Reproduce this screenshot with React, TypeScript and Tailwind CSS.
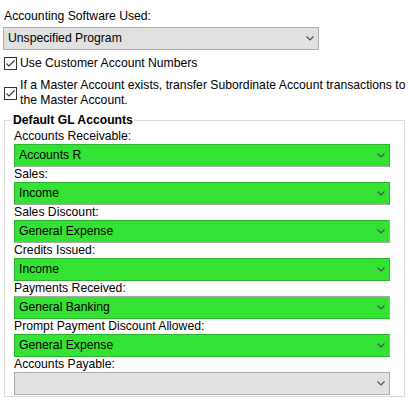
import React from 'react';

const font = { fontFamily: '"Liberation Sans", Arial, sans-serif' };

function Chevron() {
  return (
    <svg width="8" height="5" viewBox="0 0 8 5" className="shrink-0">
      <polyline points="0.5,0.5 4,4 7.5,0.5" fill="none" stroke="#4d4d4d" strokeWidth="1.1" />
    </svg>
  );
}

function Select({ value, className }: { value: string; className: string }) {
  return (
    <div className={`flex h-[23px] items-center justify-between border pl-[4px] pr-[4px] ${className}`}>
      <span className="leading-[15px] text-black">{value}</span>
      <Chevron />
    </div>
  );
}

function Check() {
  return (
    <span className="flex h-[13px] w-[13px] shrink-0 items-center justify-center border border-[#333] bg-white">
      <svg width="11" height="11" viewBox="0 0 11 11">
        <polyline points="1.5,5.5 4,8 9.5,2.5" fill="none" stroke="#333" strokeWidth="1.1" />
      </svg>
    </span>
  );
}

const rows = [
  { label: 'Accounts Receivable:', value: 'Accounts R', edge: 'bg-[#33e233] border-[#2bb52b] border-b-[#a8a8a8]' },
  { label: 'Sales:', value: 'Income', edge: 'bg-[#33e233] border-[#2bb52b] border-b-[#a8a8a8]' },
  { label: 'Sales Discount:', value: 'General Expense', edge: 'bg-[#33e233] border-[#2bb52b] border-r-[#a8a8a8] border-b-[#a8a8a8]' },
  { label: 'Credits Issued:', value: 'Income', edge: 'bg-[#33e233] border-[#2bb52b]' },
  { label: 'Payments Received:', value: 'General Banking', edge: 'bg-[#33e233] border-[#a8a8a8] border-b-[#2bb52b] border-l-[#2bb52b]' },
  { label: 'Prompt Payment Discount Allowed:', value: 'General Expense', edge: 'bg-[#33e233] border-[#2bb52b] border-r-[#a8a8a8]' },
  { label: 'Accounts Payable:', value: '', edge: 'bg-[#e1e1e1] border-[#adadad]' },
];

export default function App() {
  return (
    <div className="h-[415px] w-[420px] bg-white pl-[3px] pt-[9px] text-[12.2px] leading-[15px] text-black" style={font}>
      <div className="pl-[1px]">Accounting Software Used:</div>
      <div className="mt-[3px] w-[316px]">
        <Select value="Unspecified Program" className="bg-[#e1e1e1] border-[#adadad]" />
      </div>

      <div className="mt-[6px] flex items-center gap-[3px] pl-[1px]">
        <Check />
        <span>Use Customer Account Numbers</span>
      </div>

      <div className="mt-[7px] flex items-center gap-[3px] pl-[1px]">
        <Check />
        <span>
          If a Master Account exists, transfer Subordinate Account transactions to
          <br />
          the Master Account.
        </span>
      </div>

      <fieldset className="mt-[5px] ml-[1px] w-[401px] border border-[#dcdcdc] pl-[9px] pr-[14px] pb-[1px]">
        <legend className="ml-[-2px] px-[1px] font-bold">Default GL Accounts</legend>
        <div className="mt-[1px] flex flex-col">
          {rows.map((r) => (
            <div key={r.label} className="flex flex-col">
              <span className="h-[15px]">{r.label}</span>
              <Select value={r.value} className={r.edge} />
            </div>
          ))}
        </div>
      </fieldset>
    </div>
  );
}
